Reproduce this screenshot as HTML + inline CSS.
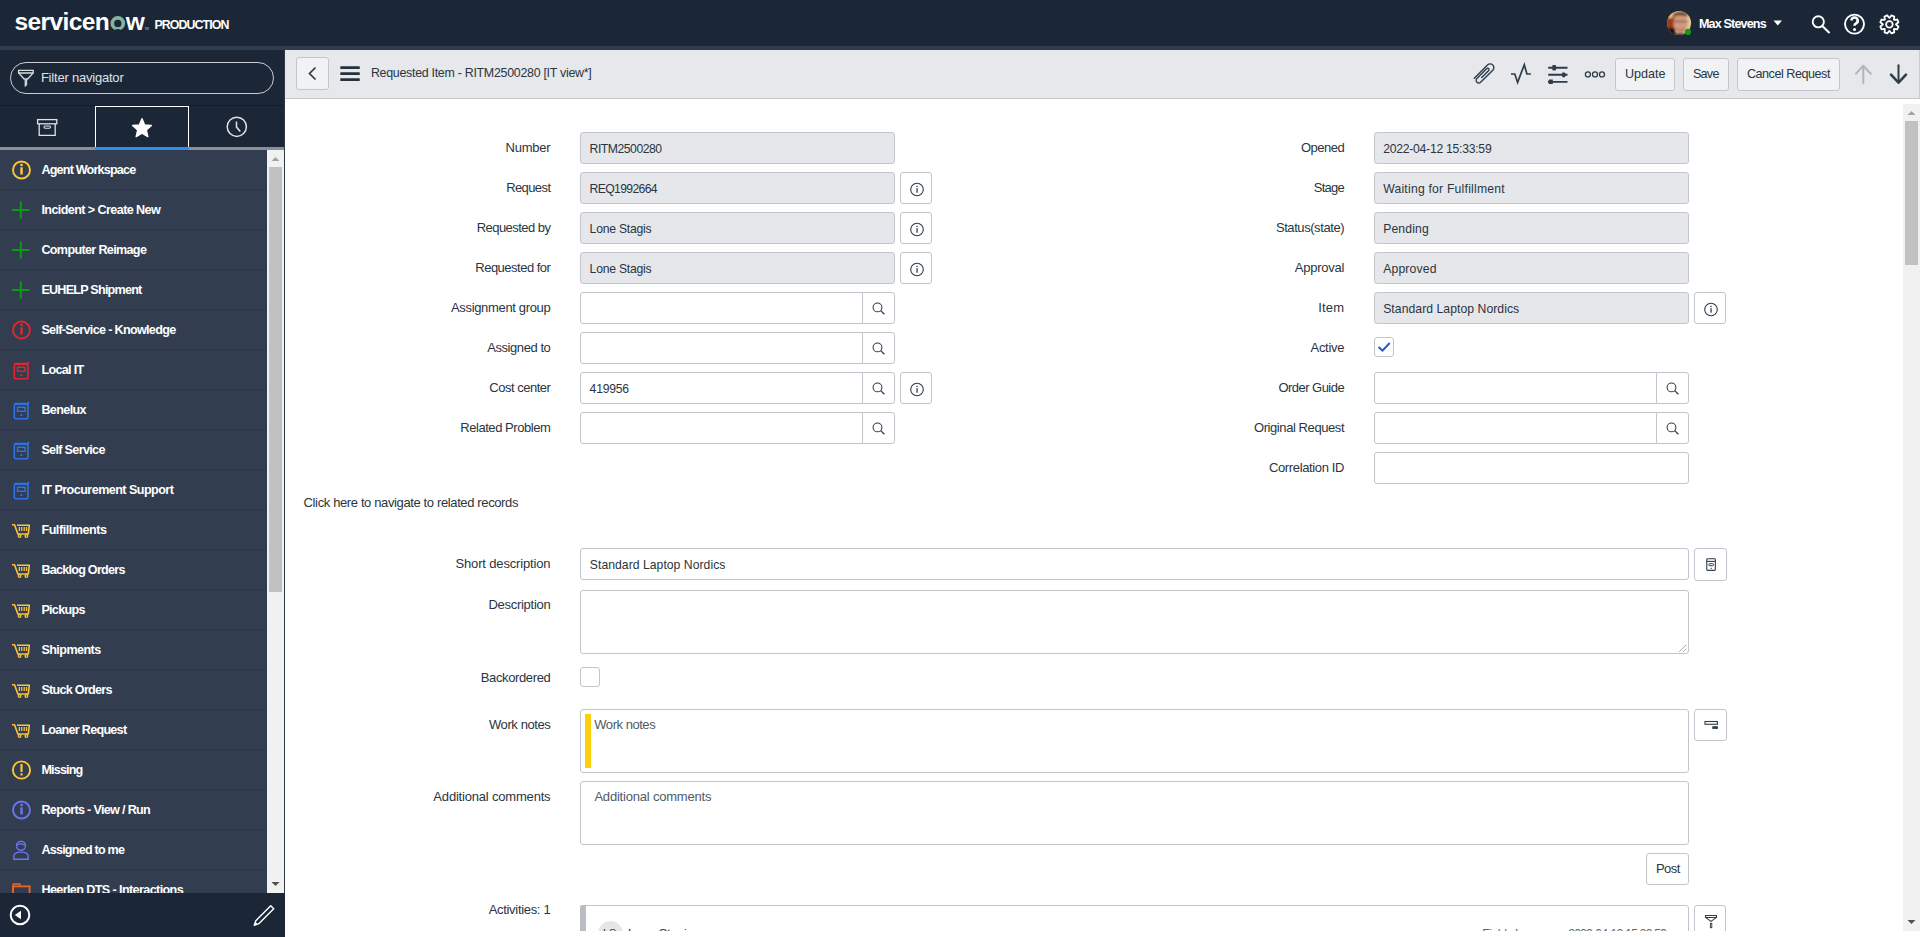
<!DOCTYPE html>
<html><head><meta charset="utf-8"><title>Requested Item</title><style>
*{box-sizing:border-box;margin:0;padding:0}
html,body{width:1920px;height:937px;overflow:hidden;background:#fff;font-family:"Liberation Sans",sans-serif;color:#2e3d49}
.a{position:absolute}
.tx{position:absolute;white-space:pre}
.bm{display:inline-block;width:0;height:0}
#navlist{position:absolute;left:0;top:150px;width:267px;height:743px;background:#323e4f;overflow:hidden}
.nrow{position:absolute;left:0;width:267px;height:40px;border-bottom:1px solid #2a3543}
.nrow svg{position:absolute;left:0;top:0}
.btn{position:absolute;top:58px;height:33px;background:#f1f2f4;border:1px solid #c3c7cc;border-radius:3px}
.fld{position:absolute;height:32px;border:1px solid #c2c6cc;border-radius:3px;background:#fff}
.ro{background:#e6e7ea}
.ibtn{position:absolute;width:32px;height:32px;border:1px solid #c2c6cc;border-radius:3px;background:#fff}
.sbtn{position:absolute;width:33px;height:32px;border:1px solid #c2c6cc;border-radius:0 3px 3px 0;background:#fff}
svg{display:block}
svg.a{position:absolute}
</style></head><body>
<div class="a" style="left:0;top:0;width:1920px;height:46px;background:#1b2737"></div>
<div class="a" style="left:0;top:46px;width:1920px;height:4px;background:#303c4d"></div>
<div class="tx" id="t0" style="left:14.40px;top:10.01px;font-size:24.5px;font-weight:700;color:#fff;line-height:24.5px;letter-spacing:-0.583px">servicen<span style="display:inline-block;width:0;height:0"></span></div>
<div class="tx" id="t1" style="left:125.80px;top:10.01px;font-size:24.5px;font-weight:700;color:#fff;line-height:24.5px;letter-spacing:0.000px">w<span style="display:inline-block;width:0;height:0"></span></div>
<svg class="a" style="left:105px;top:10px" width="26" height="26" viewBox="105 10 26 26"><circle cx="117.8" cy="23.4" r="5.5" fill="none" stroke="#81b5a1" stroke-width="3.7"/><ellipse cx="117.8" cy="30.8" rx="3" ry="1.7" fill="#1b2737"/></svg>
<div class="a" style="left:144.5px;top:27.5px;font-size:3px;color:#c8ccd0;line-height:3px">TM</div>
<div class="tx" id="t2" style="left:154.40px;top:19.00px;font-size:12.4px;font-weight:700;color:#fff;line-height:12.4px;letter-spacing:-0.923px">PRODUCTION<span style="display:inline-block;width:0;height:0"></span></div>
<svg class="a" style="left:1663px;top:7px" width="32" height="32" viewBox="1663 7 32 32"><defs><clipPath id="avc"><circle cx="1679.1" cy="22.9" r="12"/></clipPath><filter id="avb" x="-20%" y="-20%" width="140%" height="140%"><feGaussianBlur stdDeviation="0.9"/></filter></defs><g clip-path="url(#avc)"><rect x="1666" y="10" width="27" height="27" fill="#e2c595"/><g filter="url(#avb)"><path d="M1665 10h10l-1 18h-9z" fill="#9a3c12"/><path d="M1670 10h5l-3 8h-4z" fill="#e8c080"/><path d="M1665 28h10l1 8h-11z" fill="#141010"/><ellipse cx="1680.5" cy="23.5" rx="7" ry="9.5" fill="#d49a78"/><path d="M1673.5 16c1-5 12-6 14-1v2c-4-2-10-2-14 0z" fill="#6a4a30"/><path d="M1674 21.5h13" stroke="#6b6b78" stroke-width="1.6"/><path d="M1676 29c3 1.5 6 1.5 9 0" stroke="#9a6050" stroke-width="1.2" fill="none"/><path d="M1672 36c2-4 14-4 17 0z" fill="#2a2020"/></g></g><circle cx="1688" cy="31.9" r="3.1" fill="#0e9a16"/></svg>
<div class="tx" id="t3" style="left:1698.90px;top:18.01px;font-size:12.6px;font-weight:700;color:#fff;line-height:12.6px;letter-spacing:-0.850px">Max Stevens<span style="display:inline-block;width:0;height:0"></span></div>
<svg class="a" style="left:1773px;top:20px" width="10" height="6"><path d="M0.5 0.5h8.5l-4.25 5z" fill="#fff"/></svg>
<svg class="a" style="left:1800px;top:0" width="120" height="46" viewBox="1800 0 120 46"><circle cx="1818.3" cy="21.8" r="5.6" fill="none" stroke="#fff" stroke-width="1.9"/><path d="M1822.6 26.3l6.4 6.1" stroke="#fff" stroke-width="2.1" stroke-linecap="round"/><circle cx="1854.5" cy="24.1" r="9.5" fill="none" stroke="#fff" stroke-width="1.9"/><path d="M1851.5 20.6a3.1 3.1 0 1 1 4.6 2.7c-1.2.7-1.6 1.2-1.6 2.5" fill="none" stroke="#fff" stroke-width="2.6"/><circle cx="1854.5" cy="29.5" r="1.5" fill="#fff"/><path d="M1898.45,26.54 L1897.32,29.28 L1894.22,28.91 L1893.91,29.22 L1894.28,32.32 L1891.54,33.45 L1889.62,31.00 L1889.18,31.00 L1887.26,33.45 L1884.52,32.32 L1884.89,29.22 L1884.58,28.91 L1881.48,29.28 L1880.35,26.54 L1882.80,24.62 L1882.80,24.18 L1880.35,22.26 L1881.48,19.52 L1884.58,19.89 L1884.89,19.58 L1884.52,16.48 L1887.26,15.35 L1889.18,17.80 L1889.62,17.80 L1891.54,15.35 L1894.28,16.48 L1893.91,19.58 L1894.22,19.89 L1897.32,19.52 L1898.45,22.26 L1896.00,24.18 L1896.00,24.62Z" fill="none" stroke="#fff" stroke-width="1.8" stroke-linejoin="round"/><circle cx="1889.4" cy="24.4" r="3.3" fill="none" stroke="#fff" stroke-width="1.8"/></svg>
<div class="a" style="left:0;top:50px;width:285px;height:887px;background:#1b2737"></div>
<div class="a" style="left:10px;top:62px;width:264px;height:32px;border:1px solid #c9ccd1;border-radius:16px"></div>
<svg class="a" style="left:16px;top:68px" width="20" height="21"><path d="M2.6 2.4h14.6v2.6H2.6z" fill="none" stroke="#d9dce0" stroke-width="1.3"/><path d="M2.8 5.1l5.3 5.9h3.6l5.3-5.9" fill="none" stroke="#d9dce0" stroke-width="1.3" stroke-linejoin="round"/><path d="M8.6 11.2h2.6v5.8l-2.6 2.2z" fill="#c9d3de"/></svg>
<div class="tx" id="t4" style="left:40.90px;top:71.01px;font-size:13px;font-weight:400;color:#dfe2e6;line-height:13px;letter-spacing:-0.210px">Filter navigator<span style="display:inline-block;width:0;height:0"></span></div>
<div class="a" style="left:0;top:105px;width:284px;height:1px;background:#141c27"></div>
<div class="a" style="left:0;top:147px;width:284px;height:3px;background:#8a9098"></div>
<div class="a" style="left:95px;top:106px;width:94px;height:41px;border:1px solid #fff;border-bottom:none;background:#1b2737"></div>
<div class="a" style="left:95px;top:147px;width:94px;height:3px;background:#2f8cf0"></div>
<svg class="a" style="left:36px;top:118px" width="23" height="19"><rect x="1.6" y="1.6" width="19.2" height="4.2" fill="none" stroke="#dfe2e6" stroke-width="1.3"/><path d="M3.2 5.8v11.5h16V5.8" fill="none" stroke="#dfe2e6" stroke-width="1.3"/><rect x="8" y="8" width="6.5" height="2.2" rx="1.1" fill="none" stroke="#dfe2e6" stroke-width="1.1"/></svg>
<svg class="a" style="left:131px;top:117px" width="22" height="22"><path d="M11.00,1.70 L13.65,7.96 L20.42,8.54 L15.28,12.99 L16.82,19.61 L11.00,16.10 L5.18,19.61 L6.72,12.99 L1.58,8.54 L8.35,7.96Z" fill="#fff" stroke="#fff" stroke-width="1.4" stroke-linejoin="round"/></svg>
<svg class="a" style="left:225px;top:115px" width="24" height="24"><circle cx="11.8" cy="11.8" r="9.6" fill="none" stroke="#dfe2e6" stroke-width="1.5"/><path d="M11.5 6.5v5.6l3.8 4.4" fill="none" stroke="#dfe2e6" stroke-width="1.5"/></svg>
<div id="navlist">
<div class="nrow" style="top:0px"><svg width="42" height="40"><circle cx="21.5" cy="20" r="8.5" fill="none" stroke="#fcc43a" stroke-width="1.9"/><rect x="20.3" y="17.3" width="2.5" height="7.2" fill="#fcc43a"/><rect x="20.3" y="13.8" width="2.5" height="2.3" fill="#fcc43a"/></svg><div class="tx" id="t5" style="left:41.40px;top:14.01px;font-size:12.6px;font-weight:700;color:#fff;line-height:12.6px;letter-spacing:-0.811px">Agent Workspace<span style="display:inline-block;width:0;height:0"></span></div></div>
<div class="nrow" style="top:40px"><svg width="42" height="40"><path d="M20.8 11.5v17M12 20h17.5" stroke="#0c9a17" stroke-width="1.9"/></svg><div class="tx" id="t6" style="left:41.40px;top:14.01px;font-size:12.6px;font-weight:700;color:#fff;line-height:12.6px;letter-spacing:-0.591px">Incident &gt; Create New<span style="display:inline-block;width:0;height:0"></span></div></div>
<div class="nrow" style="top:80px"><svg width="42" height="40"><path d="M20.8 11.5v17M12 20h17.5" stroke="#0c9a17" stroke-width="1.9"/></svg><div class="tx" id="t7" style="left:41.40px;top:14.01px;font-size:12.6px;font-weight:700;color:#fff;line-height:12.6px;letter-spacing:-0.664px">Computer Reimage<span style="display:inline-block;width:0;height:0"></span></div></div>
<div class="nrow" style="top:120px"><svg width="42" height="40"><path d="M20.8 11.5v17M12 20h17.5" stroke="#0c9a17" stroke-width="1.9"/></svg><div class="tx" id="t8" style="left:41.40px;top:14.01px;font-size:12.6px;font-weight:700;color:#fff;line-height:12.6px;letter-spacing:-0.773px">EUHELP Shipment<span style="display:inline-block;width:0;height:0"></span></div></div>
<div class="nrow" style="top:160px"><svg width="42" height="40"><circle cx="21.5" cy="20" r="8.5" fill="none" stroke="#e0262e" stroke-width="1.9"/><rect x="20.3" y="17.3" width="2.5" height="7.2" fill="#e0262e"/><rect x="20.3" y="13.8" width="2.5" height="2.3" fill="#e0262e"/></svg><div class="tx" id="t9" style="left:41.40px;top:14.01px;font-size:12.6px;font-weight:700;color:#fff;line-height:12.6px;letter-spacing:-0.681px">Self-Service - Knowledge<span style="display:inline-block;width:0;height:0"></span></div></div>
<div class="nrow" style="top:200px"><svg width="42" height="40"><path d="M14.5 13.5h14v-1.8" fill="none" stroke="#e0262e" stroke-width="1.5"/><rect x="14.3" y="14.2" width="13.7" height="14.6" rx="1.5" fill="none" stroke="#e0262e" stroke-width="1.6"/><rect x="17.5" y="17.3" width="7.6" height="4" fill="none" stroke="#e0262e" stroke-width="1.4"/><rect x="20.3" y="24.3" width="2.2" height="1.6" fill="#e0262e"/></svg><div class="tx" id="t10" style="left:41.40px;top:14.01px;font-size:12.6px;font-weight:700;color:#fff;line-height:12.6px;letter-spacing:-0.684px">Local IT<span style="display:inline-block;width:0;height:0"></span></div></div>
<div class="nrow" style="top:240px"><svg width="42" height="40"><path d="M14.5 13.5h14v-1.8" fill="none" stroke="#2f72e6" stroke-width="1.5"/><rect x="14.3" y="14.2" width="13.7" height="14.6" rx="1.5" fill="none" stroke="#2f72e6" stroke-width="1.6"/><rect x="17.5" y="17.3" width="7.6" height="4" fill="none" stroke="#2f72e6" stroke-width="1.4"/><rect x="20.3" y="24.3" width="2.2" height="1.6" fill="#2f72e6"/></svg><div class="tx" id="t11" style="left:41.40px;top:14.01px;font-size:12.6px;font-weight:700;color:#fff;line-height:12.6px;letter-spacing:-0.632px">Benelux<span style="display:inline-block;width:0;height:0"></span></div></div>
<div class="nrow" style="top:280px"><svg width="42" height="40"><path d="M14.5 13.5h14v-1.8" fill="none" stroke="#2f72e6" stroke-width="1.5"/><rect x="14.3" y="14.2" width="13.7" height="14.6" rx="1.5" fill="none" stroke="#2f72e6" stroke-width="1.6"/><rect x="17.5" y="17.3" width="7.6" height="4" fill="none" stroke="#2f72e6" stroke-width="1.4"/><rect x="20.3" y="24.3" width="2.2" height="1.6" fill="#2f72e6"/></svg><div class="tx" id="t12" style="left:41.40px;top:14.01px;font-size:12.6px;font-weight:700;color:#fff;line-height:12.6px;letter-spacing:-0.674px">Self Service<span style="display:inline-block;width:0;height:0"></span></div></div>
<div class="nrow" style="top:320px"><svg width="42" height="40"><path d="M14.5 13.5h14v-1.8" fill="none" stroke="#2f72e6" stroke-width="1.5"/><rect x="14.3" y="14.2" width="13.7" height="14.6" rx="1.5" fill="none" stroke="#2f72e6" stroke-width="1.6"/><rect x="17.5" y="17.3" width="7.6" height="4" fill="none" stroke="#2f72e6" stroke-width="1.4"/><rect x="20.3" y="24.3" width="2.2" height="1.6" fill="#2f72e6"/></svg><div class="tx" id="t13" style="left:41.40px;top:14.01px;font-size:12.6px;font-weight:700;color:#fff;line-height:12.6px;letter-spacing:-0.554px">IT Procurement Support<span style="display:inline-block;width:0;height:0"></span></div></div>
<div class="nrow" style="top:360px"><svg width="42" height="40"><path d="M12 14.8h2.5l3.4 9.2h10.4l1-8.8h-12.4" fill="none" stroke="#fcc43a" stroke-width="1.6" stroke-linejoin="round"/><path d="M19.4 17v4M21.7 17v4M24.2 17v4M26.5 17v4" stroke="#fcc43a" stroke-width="1.3"/><circle cx="19.6" cy="26" r="1.35" fill="none" stroke="#fcc43a" stroke-width="1.3"/><circle cx="26.4" cy="26" r="1.35" fill="none" stroke="#fcc43a" stroke-width="1.3"/></svg><div class="tx" id="t14" style="left:41.40px;top:14.01px;font-size:12.6px;font-weight:700;color:#fff;line-height:12.6px;letter-spacing:-0.451px">Fulfillments<span style="display:inline-block;width:0;height:0"></span></div></div>
<div class="nrow" style="top:400px"><svg width="42" height="40"><path d="M12 14.8h2.5l3.4 9.2h10.4l1-8.8h-12.4" fill="none" stroke="#fcc43a" stroke-width="1.6" stroke-linejoin="round"/><path d="M19.4 17v4M21.7 17v4M24.2 17v4M26.5 17v4" stroke="#fcc43a" stroke-width="1.3"/><circle cx="19.6" cy="26" r="1.35" fill="none" stroke="#fcc43a" stroke-width="1.3"/><circle cx="26.4" cy="26" r="1.35" fill="none" stroke="#fcc43a" stroke-width="1.3"/></svg><div class="tx" id="t15" style="left:41.40px;top:14.01px;font-size:12.6px;font-weight:700;color:#fff;line-height:12.6px;letter-spacing:-0.753px">Backlog Orders<span style="display:inline-block;width:0;height:0"></span></div></div>
<div class="nrow" style="top:440px"><svg width="42" height="40"><path d="M12 14.8h2.5l3.4 9.2h10.4l1-8.8h-12.4" fill="none" stroke="#fcc43a" stroke-width="1.6" stroke-linejoin="round"/><path d="M19.4 17v4M21.7 17v4M24.2 17v4M26.5 17v4" stroke="#fcc43a" stroke-width="1.3"/><circle cx="19.6" cy="26" r="1.35" fill="none" stroke="#fcc43a" stroke-width="1.3"/><circle cx="26.4" cy="26" r="1.35" fill="none" stroke="#fcc43a" stroke-width="1.3"/></svg><div class="tx" id="t16" style="left:41.40px;top:14.01px;font-size:12.6px;font-weight:700;color:#fff;line-height:12.6px;letter-spacing:-0.715px">Pickups<span style="display:inline-block;width:0;height:0"></span></div></div>
<div class="nrow" style="top:480px"><svg width="42" height="40"><path d="M12 14.8h2.5l3.4 9.2h10.4l1-8.8h-12.4" fill="none" stroke="#fcc43a" stroke-width="1.6" stroke-linejoin="round"/><path d="M19.4 17v4M21.7 17v4M24.2 17v4M26.5 17v4" stroke="#fcc43a" stroke-width="1.3"/><circle cx="19.6" cy="26" r="1.35" fill="none" stroke="#fcc43a" stroke-width="1.3"/><circle cx="26.4" cy="26" r="1.35" fill="none" stroke="#fcc43a" stroke-width="1.3"/></svg><div class="tx" id="t17" style="left:41.40px;top:14.01px;font-size:12.6px;font-weight:700;color:#fff;line-height:12.6px;letter-spacing:-0.573px">Shipments<span style="display:inline-block;width:0;height:0"></span></div></div>
<div class="nrow" style="top:520px"><svg width="42" height="40"><path d="M12 14.8h2.5l3.4 9.2h10.4l1-8.8h-12.4" fill="none" stroke="#fcc43a" stroke-width="1.6" stroke-linejoin="round"/><path d="M19.4 17v4M21.7 17v4M24.2 17v4M26.5 17v4" stroke="#fcc43a" stroke-width="1.3"/><circle cx="19.6" cy="26" r="1.35" fill="none" stroke="#fcc43a" stroke-width="1.3"/><circle cx="26.4" cy="26" r="1.35" fill="none" stroke="#fcc43a" stroke-width="1.3"/></svg><div class="tx" id="t18" style="left:41.40px;top:14.01px;font-size:12.6px;font-weight:700;color:#fff;line-height:12.6px;letter-spacing:-0.726px">Stuck Orders<span style="display:inline-block;width:0;height:0"></span></div></div>
<div class="nrow" style="top:560px"><svg width="42" height="40"><path d="M12 14.8h2.5l3.4 9.2h10.4l1-8.8h-12.4" fill="none" stroke="#fcc43a" stroke-width="1.6" stroke-linejoin="round"/><path d="M19.4 17v4M21.7 17v4M24.2 17v4M26.5 17v4" stroke="#fcc43a" stroke-width="1.3"/><circle cx="19.6" cy="26" r="1.35" fill="none" stroke="#fcc43a" stroke-width="1.3"/><circle cx="26.4" cy="26" r="1.35" fill="none" stroke="#fcc43a" stroke-width="1.3"/></svg><div class="tx" id="t19" style="left:41.40px;top:14.01px;font-size:12.6px;font-weight:700;color:#fff;line-height:12.6px;letter-spacing:-0.729px">Loaner Request<span style="display:inline-block;width:0;height:0"></span></div></div>
<div class="nrow" style="top:600px"><svg width="42" height="40"><circle cx="21.5" cy="20" r="8.6" fill="none" stroke="#fcc43a" stroke-width="1.9"/><rect x="20.4" y="14" width="2.2" height="8" fill="#fcc43a"/><rect x="20.4" y="23.3" width="2.2" height="2.2" fill="#fcc43a"/></svg><div class="tx" id="t20" style="left:41.40px;top:14.01px;font-size:12.6px;font-weight:700;color:#fff;line-height:12.6px;letter-spacing:-0.830px">Missing<span style="display:inline-block;width:0;height:0"></span></div></div>
<div class="nrow" style="top:640px"><svg width="42" height="40"><circle cx="21.5" cy="20" r="8.5" fill="none" stroke="#6b74f0" stroke-width="1.9"/><rect x="20.3" y="17.3" width="2.5" height="7.2" fill="#6b74f0"/><rect x="20.3" y="13.8" width="2.5" height="2.3" fill="#6b74f0"/></svg><div class="tx" id="t21" style="left:41.40px;top:14.01px;font-size:12.6px;font-weight:700;color:#fff;line-height:12.6px;letter-spacing:-0.675px">Reports - View / Run<span style="display:inline-block;width:0;height:0"></span></div></div>
<div class="nrow" style="top:680px"><svg width="42" height="40"><circle cx="21" cy="15.8" r="4.5" fill="none" stroke="#6b74f0" stroke-width="1.4"/><path d="M17 15c2-1.2 5-1.4 8 .2" fill="none" stroke="#6b74f0" stroke-width="1.2"/><path d="M13.8 29.3v-2.8c0-2.4 2.6-4.4 7.2-4.4s7.2 2 7.2 4.4v2.8z" fill="none" stroke="#6b74f0" stroke-width="1.4"/></svg><div class="tx" id="t22" style="left:41.40px;top:14.01px;font-size:12.6px;font-weight:700;color:#fff;line-height:12.6px;letter-spacing:-0.783px">Assigned to me<span style="display:inline-block;width:0;height:0"></span></div></div>
<div class="nrow" style="top:720px"><svg width="42" height="40"><path d="M13.2 15.8v-1.9h6.6v1.9" fill="none" stroke="#f0642a" stroke-width="1.5"/><path d="M13 32V16.4H29.6V32" fill="none" stroke="#f0642a" stroke-width="1.9"/></svg><div class="tx" id="t23" style="left:41.40px;top:14.01px;font-size:12.6px;font-weight:700;color:#fff;line-height:12.6px;letter-spacing:-0.606px">Heerlen DTS - Interactions<span style="display:inline-block;width:0;height:0"></span></div></div>
</div>
<div class="a" style="left:267px;top:150px;width:17px;height:743px;background:#f1f1f1"></div>
<div class="a" style="left:269px;top:167px;width:13px;height:425px;background:#c1c1c1"></div>
<svg class="a" style="left:267px;top:150px" width="17" height="17"><path d="M4.5 11h8l-4-4z" fill="#a3a3a3"/></svg>
<svg class="a" style="left:267px;top:876px" width="17" height="17"><path d="M4.5 6h8l-4 4z" fill="#505050"/></svg>
<div class="a" style="left:284px;top:50px;width:1px;height:887px;background:#2e3a4a"></div>
<div class="a" style="left:0;top:893px;width:285px;height:44px;background:#1b2737"></div>
<svg class="a" style="left:8px;top:903px" width="24" height="24"><circle cx="12" cy="12" r="9.3" fill="none" stroke="#fff" stroke-width="2"/><path d="M6.8 12l6.2-4.3v8.6z" fill="#fff"/></svg>
<svg class="a" style="left:250px;top:902px" width="28" height="28" viewBox="250 902 28 28"><path d="M254.2 925.3l1.6-4.6 14.9-14.9 3 3-14.9 14.9z" fill="none" stroke="#fff" stroke-width="1.4" stroke-linejoin="round"/><path d="M254.2 925.3l1.2-3.4 2.2 2.2z" fill="#fff"/></svg>
<div class="a" style="left:285px;top:50px;width:1635px;height:49px;background:#e6e8eb;border-bottom:1px solid #c5c9ce;border-right:1px solid #c9ccd0"></div>
<div class="a" style="left:296px;top:57px;width:33px;height:33px;background:#f1f2f4;border:1px solid #c3c7cc;border-radius:3px"></div>
<svg class="a" style="left:296px;top:57px" width="33" height="33"><path d="M19.5 10.5l-6 6 6 6" fill="none" stroke="#2e3d49" stroke-width="1.7"/></svg>
<svg class="a" style="left:340px;top:66px" width="20" height="16"><rect x="0.3" y="0.2" width="19.5" height="2.8" rx="0.6" fill="#27313c"/><rect x="0.3" y="6.2" width="19.5" height="2.8" rx="0.6" fill="#27313c"/><rect x="0.3" y="12.2" width="19.5" height="2.8" rx="0.6" fill="#27313c"/></svg>
<div class="tx" id="t24" style="left:370.90px;top:67.00px;font-size:12.4px;font-weight:400;color:#2a3541;line-height:12.4px;letter-spacing:-0.273px">Requested Item - RITM2500280 [IT view*]<span style="display:inline-block;width:0;height:0"></span></div>
<svg class="a" style="left:1440px;top:50px" width="480" height="48" viewBox="1440 50 480 48"><path d="M1474.3 78.2 L1487.5 65 A3.7 3.7 0 0 1 1492.8 70.2 L1480.6 82.2 A2.6 2.6 0 0 1 1476.9 78.5 L1486.8 68.6 A1.3 1.3 0 0 1 1488.7 70.4 L1481.7 77.5" fill="none" stroke="#2e3d49" stroke-width="1.4" stroke-linecap="round" stroke-linejoin="round"/><path d="M1511 74 H1514.8 L1517.6 82.4 L1524.3 64.7 L1526.9 74 H1530.9" fill="none" stroke="#2e3d49" stroke-width="1.7" stroke-linejoin="miter" stroke-miterlimit="8"/><path d="M1548.2 67.8H1567.5M1548.2 74.8H1567.5M1548.2 81.9H1567.5" stroke="#2e3d49" stroke-width="1.9"/><rect x="1552.4" y="65.1" width="3.6" height="5.3" fill="#2e3d49"/><path d="M1562.2 72.4h2.5l1.6 2.4-1.6 2.5h-2.5z" fill="#2e3d49"/><path d="M1549.1 79.5h3.7v4.6h-3.7l-1.2-2.3z" fill="#2e3d49"/><circle cx="1587.9" cy="74.4" r="2.5" fill="none" stroke="#2e3d49" stroke-width="1.3"/><circle cx="1595" cy="74.4" r="2.5" fill="none" stroke="#2e3d49" stroke-width="1.3"/><circle cx="1602" cy="74.4" r="2.5" fill="none" stroke="#2e3d49" stroke-width="1.3"/><path d="M1863.3 83.3V66M1856 73.7l7.3-8 7.5 8" fill="none" stroke="#b0b5ba" stroke-width="2" stroke-linecap="round" stroke-linejoin="round"/><path d="M1898.5 65.3V82" fill="none" stroke="#2e3d49" stroke-width="2" stroke-linecap="round"/><path d="M1891 74.7l7.5 8 7.5-8" fill="none" stroke="#2e3d49" stroke-width="2.6" stroke-linecap="round" stroke-linejoin="round"/></svg>
<div class="btn" style="left:1615px;width:60px"></div>
<div class="tx" id="t25" style="left:1625.00px;top:68.01px;font-size:12.6px;font-weight:400;color:#2a3541;line-height:12.6px;letter-spacing:-0.043px">Update<span style="display:inline-block;width:0;height:0"></span></div>
<div class="btn" style="left:1683px;width:46px"></div>
<div class="tx" id="t26" style="left:1692.90px;top:68.01px;font-size:12.6px;font-weight:400;color:#2a3541;line-height:12.6px;letter-spacing:-0.737px">Save<span style="display:inline-block;width:0;height:0"></span></div>
<div class="btn" style="left:1737px;width:103px"></div>
<div class="tx" id="t27" style="left:1746.90px;top:68.01px;font-size:12.6px;font-weight:400;color:#2a3541;line-height:12.6px;letter-spacing:-0.469px">Cancel Request<span style="display:inline-block;width:0;height:0"></span></div>
<div class="tx" id="t28" style="right:1369.60px;top:141.01px;font-size:13px;font-weight:400;color:#2a3541;line-height:13px;letter-spacing:-0.242px">Number<span style="display:inline-block;width:0;height:0"></span></div>
<div class="fld ro" style="left:580px;top:132px;width:315px"></div>
<div class="tx" id="t29" style="left:589.60px;top:143.02px;font-size:12.2px;font-weight:400;color:#2a3541;line-height:12.2px;letter-spacing:-0.476px">RITM2500280<span style="display:inline-block;width:0;height:0"></span></div>
<div class="tx" id="t30" style="right:1369.60px;top:181.01px;font-size:13px;font-weight:400;color:#2a3541;line-height:13px;letter-spacing:-0.597px">Request<span style="display:inline-block;width:0;height:0"></span></div>
<div class="fld ro" style="left:580px;top:172px;width:315px"></div>
<div class="tx" id="t31" style="left:589.60px;top:183.02px;font-size:12.2px;font-weight:400;color:#2a3541;line-height:12.2px;letter-spacing:-0.654px">REQ1992664<span style="display:inline-block;width:0;height:0"></span></div>
<div class="ibtn" style="left:900px;top:172px;height:32px"><svg width="30" height="30"><circle cx="16" cy="16.5" r="6.3" fill="none" stroke="#2e3d49" stroke-width="1.1"/><rect x="15.4" y="15.2" width="1.3" height="4.5" fill="#2e3d49"/><rect x="15.4" y="12.8" width="1.3" height="1.3" fill="#2e3d49"/></svg></div>
<div class="tx" id="t32" style="right:1369.60px;top:221.01px;font-size:13px;font-weight:400;color:#2a3541;line-height:13px;letter-spacing:-0.545px">Requested by<span style="display:inline-block;width:0;height:0"></span></div>
<div class="fld ro" style="left:580px;top:212px;width:315px"></div>
<div class="tx" id="t33" style="left:589.60px;top:223.02px;font-size:12.2px;font-weight:400;color:#2a3541;line-height:12.2px;letter-spacing:-0.240px">Lone Stagis<span style="display:inline-block;width:0;height:0"></span></div>
<div class="ibtn" style="left:900px;top:212px;height:32px"><svg width="30" height="30"><circle cx="16" cy="16.5" r="6.3" fill="none" stroke="#2e3d49" stroke-width="1.1"/><rect x="15.4" y="15.2" width="1.3" height="4.5" fill="#2e3d49"/><rect x="15.4" y="12.8" width="1.3" height="1.3" fill="#2e3d49"/></svg></div>
<div class="tx" id="t34" style="right:1369.60px;top:261.01px;font-size:13px;font-weight:400;color:#2a3541;line-height:13px;letter-spacing:-0.503px">Requested for<span style="display:inline-block;width:0;height:0"></span></div>
<div class="fld ro" style="left:580px;top:252px;width:315px"></div>
<div class="tx" id="t35" style="left:589.60px;top:263.02px;font-size:12.2px;font-weight:400;color:#2a3541;line-height:12.2px;letter-spacing:-0.240px">Lone Stagis<span style="display:inline-block;width:0;height:0"></span></div>
<div class="ibtn" style="left:900px;top:252px;height:32px"><svg width="30" height="30"><circle cx="16" cy="16.5" r="6.3" fill="none" stroke="#2e3d49" stroke-width="1.1"/><rect x="15.4" y="15.2" width="1.3" height="4.5" fill="#2e3d49"/><rect x="15.4" y="12.8" width="1.3" height="1.3" fill="#2e3d49"/></svg></div>
<div class="tx" id="t36" style="right:1369.60px;top:301.01px;font-size:13px;font-weight:400;color:#2a3541;line-height:13px;letter-spacing:-0.336px">Assignment group<span style="display:inline-block;width:0;height:0"></span></div>
<div class="fld" style="left:580px;top:292px;width:283px;border-radius:3px 0 0 3px"></div>
<div class="sbtn" style="left:862px;top:292px"><svg width="31" height="30"><circle cx="14.5" cy="14.4" r="4.4" fill="none" stroke="#2e3d49" stroke-width="1.05"/><path d="M17.7 17.6l3.7 3.7" stroke="#2e3d49" stroke-width="1.3"/></svg></div>
<div class="tx" id="t37" style="right:1369.60px;top:341.01px;font-size:13px;font-weight:400;color:#2a3541;line-height:13px;letter-spacing:-0.430px">Assigned to<span style="display:inline-block;width:0;height:0"></span></div>
<div class="fld" style="left:580px;top:332px;width:283px;border-radius:3px 0 0 3px"></div>
<div class="sbtn" style="left:862px;top:332px"><svg width="31" height="30"><circle cx="14.5" cy="14.4" r="4.4" fill="none" stroke="#2e3d49" stroke-width="1.05"/><path d="M17.7 17.6l3.7 3.7" stroke="#2e3d49" stroke-width="1.3"/></svg></div>
<div class="tx" id="t38" style="right:1369.60px;top:381.01px;font-size:13px;font-weight:400;color:#2a3541;line-height:13px;letter-spacing:-0.484px">Cost center<span style="display:inline-block;width:0;height:0"></span></div>
<div class="fld" style="left:580px;top:372px;width:283px;border-radius:3px 0 0 3px"></div>
<div class="sbtn" style="left:862px;top:372px"><svg width="31" height="30"><circle cx="14.5" cy="14.4" r="4.4" fill="none" stroke="#2e3d49" stroke-width="1.05"/><path d="M17.7 17.6l3.7 3.7" stroke="#2e3d49" stroke-width="1.3"/></svg></div>
<div class="tx" id="t39" style="left:589.60px;top:383.02px;font-size:12.2px;font-weight:400;color:#2a3541;line-height:12.2px;letter-spacing:-0.239px">419956<span style="display:inline-block;width:0;height:0"></span></div>
<div class="ibtn" style="left:900px;top:372px;height:32px"><svg width="30" height="30"><circle cx="16" cy="16.5" r="6.3" fill="none" stroke="#2e3d49" stroke-width="1.1"/><rect x="15.4" y="15.2" width="1.3" height="4.5" fill="#2e3d49"/><rect x="15.4" y="12.8" width="1.3" height="1.3" fill="#2e3d49"/></svg></div>
<div class="tx" id="t40" style="right:1369.60px;top:421.01px;font-size:13px;font-weight:400;color:#2a3541;line-height:13px;letter-spacing:-0.442px">Related Problem<span style="display:inline-block;width:0;height:0"></span></div>
<div class="fld" style="left:580px;top:412px;width:283px;border-radius:3px 0 0 3px"></div>
<div class="sbtn" style="left:862px;top:412px"><svg width="31" height="30"><circle cx="14.5" cy="14.4" r="4.4" fill="none" stroke="#2e3d49" stroke-width="1.05"/><path d="M17.7 17.6l3.7 3.7" stroke="#2e3d49" stroke-width="1.3"/></svg></div>
<div class="tx" id="t41" style="right:575.90px;top:141.01px;font-size:13px;font-weight:400;color:#2a3541;line-height:13px;letter-spacing:-0.505px">Opened<span style="display:inline-block;width:0;height:0"></span></div>
<div class="fld ro" style="left:1374px;top:132px;width:315px"></div>
<div class="tx" id="t42" style="left:1383.20px;top:143.02px;font-size:12.2px;font-weight:400;color:#2a3541;line-height:12.2px;letter-spacing:-0.261px">2022-04-12 15:33:59<span style="display:inline-block;width:0;height:0"></span></div>
<div class="tx" id="t43" style="right:575.90px;top:181.01px;font-size:13px;font-weight:400;color:#2a3541;line-height:13px;letter-spacing:-0.736px">Stage<span style="display:inline-block;width:0;height:0"></span></div>
<div class="fld ro" style="left:1374px;top:172px;width:315px"></div>
<div class="tx" id="t44" style="left:1383.20px;top:183.02px;font-size:12.2px;font-weight:400;color:#2a3541;line-height:12.2px;letter-spacing:0.216px">Waiting for Fulfillment<span style="display:inline-block;width:0;height:0"></span></div>
<div class="tx" id="t45" style="right:575.90px;top:221.01px;font-size:13px;font-weight:400;color:#2a3541;line-height:13px;letter-spacing:-0.422px">Status(state)<span style="display:inline-block;width:0;height:0"></span></div>
<div class="fld ro" style="left:1374px;top:212px;width:315px"></div>
<div class="tx" id="t46" style="left:1383.20px;top:223.02px;font-size:12.2px;font-weight:400;color:#2a3541;line-height:12.2px;letter-spacing:0.140px">Pending<span style="display:inline-block;width:0;height:0"></span></div>
<div class="tx" id="t47" style="right:575.90px;top:261.01px;font-size:13px;font-weight:400;color:#2a3541;line-height:13px;letter-spacing:-0.253px">Approval<span style="display:inline-block;width:0;height:0"></span></div>
<div class="fld ro" style="left:1374px;top:252px;width:315px"></div>
<div class="tx" id="t48" style="left:1383.20px;top:263.02px;font-size:12.2px;font-weight:400;color:#2a3541;line-height:12.2px;letter-spacing:0.158px">Approved<span style="display:inline-block;width:0;height:0"></span></div>
<div class="tx" id="t49" style="right:575.90px;top:301.01px;font-size:13px;font-weight:400;color:#2a3541;line-height:13px;letter-spacing:0.114px">Item<span style="display:inline-block;width:0;height:0"></span></div>
<div class="fld ro" style="left:1374px;top:292px;width:315px"></div>
<div class="tx" id="t50" style="left:1383.20px;top:303.02px;font-size:12.2px;font-weight:400;color:#2a3541;line-height:12.2px;letter-spacing:0.052px">Standard Laptop Nordics<span style="display:inline-block;width:0;height:0"></span></div>
<div class="ibtn" style="left:1694px;top:292px;height:32px"><svg width="30" height="30"><circle cx="16" cy="16.5" r="6.3" fill="none" stroke="#2e3d49" stroke-width="1.1"/><rect x="15.4" y="15.2" width="1.3" height="4.5" fill="#2e3d49"/><rect x="15.4" y="12.8" width="1.3" height="1.3" fill="#2e3d49"/></svg></div>
<div class="tx" id="t51" style="right:575.90px;top:341.01px;font-size:13px;font-weight:400;color:#2a3541;line-height:13px;letter-spacing:-0.313px">Active<span style="display:inline-block;width:0;height:0"></span></div>
<div class="a" style="left:1374px;top:337px;width:20px;height:20px;border:1px solid #c2c6cc;border-radius:3px;background:#fff"></div>
<svg class="a" style="left:1374px;top:337px" width="20" height="20"><path d="M4.5 10l4 3.6 7.2-7.6" fill="none" stroke="#1f5fd6" stroke-width="2.1"/></svg>
<div class="tx" id="t52" style="right:575.90px;top:381.01px;font-size:13px;font-weight:400;color:#2a3541;line-height:13px;letter-spacing:-0.531px">Order Guide<span style="display:inline-block;width:0;height:0"></span></div>
<div class="fld" style="left:1374px;top:372px;width:283px;border-radius:3px 0 0 3px"></div>
<div class="sbtn" style="left:1656px;top:372px"><svg width="31" height="30"><circle cx="14.5" cy="14.4" r="4.4" fill="none" stroke="#2e3d49" stroke-width="1.05"/><path d="M17.7 17.6l3.7 3.7" stroke="#2e3d49" stroke-width="1.3"/></svg></div>
<div class="tx" id="t53" style="right:575.90px;top:421.01px;font-size:13px;font-weight:400;color:#2a3541;line-height:13px;letter-spacing:-0.419px">Original Request<span style="display:inline-block;width:0;height:0"></span></div>
<div class="fld" style="left:1374px;top:412px;width:283px;border-radius:3px 0 0 3px"></div>
<div class="sbtn" style="left:1656px;top:412px"><svg width="31" height="30"><circle cx="14.5" cy="14.4" r="4.4" fill="none" stroke="#2e3d49" stroke-width="1.05"/><path d="M17.7 17.6l3.7 3.7" stroke="#2e3d49" stroke-width="1.3"/></svg></div>
<div class="tx" id="t54" style="right:575.90px;top:461.01px;font-size:13px;font-weight:400;color:#2a3541;line-height:13px;letter-spacing:-0.359px">Correlation ID<span style="display:inline-block;width:0;height:0"></span></div>
<div class="fld" style="left:1374px;top:452px;width:315px"></div>
<div class="tx" id="t55" style="left:303.60px;top:496.01px;font-size:13px;font-weight:400;color:#2a3541;line-height:13px;letter-spacing:-0.374px">Click here to navigate to related records<span style="display:inline-block;width:0;height:0"></span></div>
<div class="tx" id="t56" style="right:1369.60px;top:557.00px;font-size:13px;font-weight:400;color:#2a3541;line-height:13px;letter-spacing:-0.158px">Short description<span style="display:inline-block;width:0;height:0"></span></div>
<div class="fld" style="left:580px;top:548px;width:1109px"></div>
<div class="tx" id="t57" style="left:589.80px;top:559.02px;font-size:12.2px;font-weight:400;color:#2a3541;line-height:12.2px;letter-spacing:0.034px">Standard Laptop Nordics<span style="display:inline-block;width:0;height:0"></span></div>
<div class="ibtn" style="left:1694px;top:548px;width:33px;height:33px"></div>
<svg class="a" style="left:1700px;top:552px" width="22" height="24" viewBox="1700 552 22 24"><rect x="1706.75" y="558.75" width="8.6" height="11.6" rx="0.8" fill="none" stroke="#2e3d49" stroke-width="1.1"/><path d="M1706.75 561.4h8.6" stroke="#2e3d49" stroke-width="1.1"/><rect x="1708.7" y="563.7" width="4.9" height="2" rx="1" fill="none" stroke="#2e3d49" stroke-width="1"/><rect x="1710.6" y="567.8" width="1.3" height="1" fill="#2e3d49"/></svg>
<div class="tx" id="t58" style="right:1369.60px;top:598.00px;font-size:13px;font-weight:400;color:#2a3541;line-height:13px;letter-spacing:-0.279px">Description<span style="display:inline-block;width:0;height:0"></span></div>
<div class="fld" style="left:580px;top:590px;width:1109px;height:64px"></div>
<svg class="a" style="left:1677px;top:642px" width="11" height="11"><path d="M2.5 9.5L9.5 2.5M6.5 9.5l3-3" stroke="#777" stroke-width="1" stroke-dasharray="1 0.4"/></svg>
<div class="tx" id="t59" style="right:1369.60px;top:671.00px;font-size:13px;font-weight:400;color:#2a3541;line-height:13px;letter-spacing:-0.368px">Backordered<span style="display:inline-block;width:0;height:0"></span></div>
<div class="a" style="left:580px;top:667px;width:20px;height:20px;border:1px solid #c2c6cc;border-radius:3px;background:#fff"></div>
<div class="tx" id="t60" style="right:1369.60px;top:718.01px;font-size:13px;font-weight:400;color:#2a3541;line-height:13px;letter-spacing:-0.408px">Work notes<span style="display:inline-block;width:0;height:0"></span></div>
<div class="fld" style="left:580px;top:709px;width:1109px;height:64px"></div>
<div class="a" style="left:585px;top:714px;width:6px;height:54px;background:#fcd10a"></div>
<div class="tx" id="t61" style="left:594.30px;top:718.01px;font-size:13px;font-weight:400;color:#505b66;line-height:13px;letter-spacing:-0.464px">Work notes<span style="display:inline-block;width:0;height:0"></span></div>
<div class="ibtn" style="left:1694px;top:709px;width:33px;height:32px"></div>
<svg class="a" style="left:1700px;top:715px" width="22" height="20" viewBox="1700 715 22 20"><rect x="1705" y="721.5" width="12.4" height="2.8" fill="none" stroke="#2e3d49" stroke-width="1.1"/><rect x="1712.3" y="726.2" width="5.6" height="2.7" fill="#2e3d49"/></svg>
<div class="tx" id="t62" style="right:1369.60px;top:790.00px;font-size:13px;font-weight:400;color:#2a3541;line-height:13px;letter-spacing:-0.191px">Additional comments<span style="display:inline-block;width:0;height:0"></span></div>
<div class="fld" style="left:580px;top:781px;width:1109px;height:64px"></div>
<div class="tx" id="t63" style="left:594.40px;top:790.00px;font-size:13px;font-weight:400;color:#505b66;line-height:13px;letter-spacing:-0.202px">Additional comments<span style="display:inline-block;width:0;height:0"></span></div>
<div class="a" style="left:1646px;top:853px;width:43px;height:32px;border:1px solid #c2c6cc;border-radius:3px;background:#fff"></div>
<div class="tx" id="t64" style="left:1656.00px;top:862.00px;font-size:13px;font-weight:400;color:#2a3541;line-height:13px;letter-spacing:-0.559px">Post<span style="display:inline-block;width:0;height:0"></span></div>
<div class="tx" id="t65" style="right:1369.60px;top:903.00px;font-size:13px;font-weight:400;color:#2a3541;line-height:13px;letter-spacing:-0.309px">Activities: 1<span style="display:inline-block;width:0;height:0"></span></div>
<div class="a" style="left:285px;top:899px;width:1618px;height:32px;overflow:hidden">
<div class="a" style="left:295px;top:6px;width:1109px;height:60px;border:1px solid #c2c6cc;border-radius:3px;background:#fff"></div>
<div class="a" style="left:295px;top:6px;width:6px;height:60px;background:#babec4;border-radius:3px 0 0 0"></div>
<div class="a" style="left:313px;top:22px;width:25px;height:25px;border-radius:50%;background:#e5e6e8"></div>
<div class="a" style="left:318px;top:27px;font-size:11px;line-height:14px;color:#2e3d49">LS</div>
<div class="a" style="left:343px;top:27px;font-size:13px;letter-spacing:-0.35px;line-height:16px;color:#2e3d49">Lone Stagis</div>
<div class="tx" id="t66" style="left:1197.15px;top:29.02px;font-size:12.2px;font-weight:400;color:#5b6670;line-height:12.2px;letter-spacing:-0.410px">Field changes<span style="display:inline-block;width:0;height:0"></span></div>
<div class="tx" id="t67" style="left:1283.15px;top:29.02px;font-size:12.2px;font-weight:400;color:#5b6670;line-height:12.2px;letter-spacing:-0.789px">2022-04-12 15:33:59<span style="display:inline-block;width:0;height:0"></span></div>
<div class="ibtn" style="left:1409px;top:6px;width:32px;height:33px"></div>
<svg class="a" style="left:1415px;top:12px" width="20" height="20" viewBox="1700 911 20 20"><path d="M1705.6 915.5h10.9v2h-10.9z" fill="none" stroke="#2e3d49" stroke-width="1.1"/><path d="M1705.9 917.6l5.1 3.8 5.1-3.8" fill="none" stroke="#2e3d49" stroke-width="1.1"/><rect x="1710.4" y="923.3" width="1.4" height="4.4" fill="none" stroke="#2e3d49" stroke-width="0.9"/></svg>
</div>
<div class="a" style="left:1903px;top:104px;width:17px;height:827px;background:#f1f1f1"></div>
<div class="a" style="left:1905px;top:121px;width:13px;height:144px;background:#c1c1c1"></div>
<svg class="a" style="left:1903px;top:104px" width="17" height="17"><path d="M4.5 11h8l-4-4z" fill="#a3a3a3"/></svg>
<svg class="a" style="left:1903px;top:914px" width="17" height="17"><path d="M4.5 6h8l-4 4z" fill="#505050"/></svg>
</body></html>
